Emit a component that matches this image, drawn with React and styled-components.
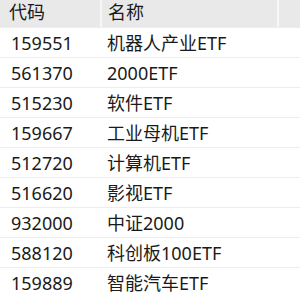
import React from "react";
import styled, { createGlobalStyle } from "styled-components";

const Global = createGlobalStyle`
  html, body { margin: 0; padding: 0; background: #ffffff; }
  body { font-family: "Noto Sans", "Noto Sans CJK SC", sans-serif; }
`;

const Table = styled.div`
  width: 300px;
  display: flex;
  flex-direction: column;
  color: #1a1a1a;
  font-size: 18px;
`;

const HeaderRow = styled.div`
  display: grid;
  grid-template-columns: 100px 175px 1fr;
  column-gap: 2px;
  height: 27px;
  background: #f7f7f7;
`;

const HeaderCell = styled.div`
  background: #e9e9e9;
  display: flex;
  align-items: center;
  box-sizing: border-box;
  padding-left: ${(p) => p.$pad}px;
  padding-bottom: 3px;
  line-height: 1;
`;

const Row = styled.div`
  display: grid;
  grid-template-columns: 100px 1fr;
  height: 30px;
  box-sizing: border-box;
  border-top: 1px solid #ededed;
`;

const Cell = styled.div`
  display: flex;
  align-items: center;
  padding-left: ${(p) => p.$pad}px;
  white-space: nowrap;
  line-height: 1;
`;

const data = [
  ["159551", "机器人产业ETF"],
  ["561370", "2000ETF"],
  ["515230", "软件ETF"],
  ["159667", "工业母机ETF"],
  ["512720", "计算机ETF"],
  ["516620", "影视ETF"],
  ["932000", "中证2000"],
  ["588120", "科创板100ETF"],
  ["159889", "智能汽车ETF"],
];

export default function App() {
  return (
    <>
      <Global />
      <Table>
        <HeaderRow>
          <HeaderCell $pad={9}>代码</HeaderCell>
          <HeaderCell $pad={6}>名称</HeaderCell>
          <HeaderCell $pad={0} />
        </HeaderRow>
        {data.map(([code, name]) => (
          <Row key={code}>
            <Cell $pad={11}>{code}</Cell>
            <Cell $pad={7}>{name}</Cell>
          </Row>
        ))}
      </Table>
    </>
  );
}
